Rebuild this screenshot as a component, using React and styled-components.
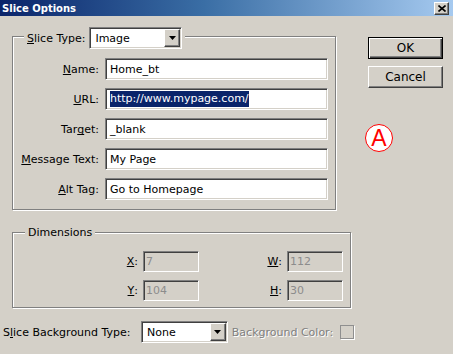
import React from "react";
import styled, { createGlobalStyle, css } from "styled-components";

const GlobalStyle = createGlobalStyle`
  html, body {
    margin: 0;
    padding: 0;
    background: #d4d0c8;
  }
  body {
    font-family: "DejaVu Sans", Tahoma, sans-serif;
    font-size: 11px;
    color: #000;
  }
`;

/* classic 3D borders */
const raised = css`
  border: 1px solid;
  border-color: #fff #404040 #404040 #fff;
  box-shadow: inset -1px -1px 0 #808080, inset 1px 1px 0 #d4d0c8;
`;

const sunken = css`
  border: 1px solid;
  border-color: #808080 #fff #fff #808080;
  box-shadow: inset 1px 1px 0 #404040, inset -1px -1px 0 #d4d0c8;
`;

const App = () => {
  return (
    <>
      <GlobalStyle />
      <Window>
        <TitleBar>
          <Title>Slice Options</Title>
          <CloseButton>
            <svg width="8" height="7" viewBox="0 0 8 7">
              <path d="M0.5 0.5 L7.5 6.5 M7.5 0.5 L0.5 6.5" stroke="#000" strokeWidth="1.6" />
            </svg>
          </CloseButton>
        </TitleBar>

        <Body>
          <LeftColumn>
            {/* Slice group */}
            <GroupBox $width={324} $top={20}>
              <Legend $top={-10} $left={11}>
                <LegendLabel><U>S</U>lice Type:</LegendLabel>
                <Select $width={93} value="Image" />
              </Legend>
              <FieldGrid>
                <Label><U>N</U>ame:</Label>
                <Field>Home_bt</Field>
                <Label><U>U</U>RL:</Label>
                <Field><Selected>http://www.mypage.com/</Selected></Field>
                <Label>Tar<U>g</U>et:</Label>
                <Field>_blank</Field>
                <Label><U>M</U>essage Text:</Label>
                <Field>My Page</Field>
                <Label><U>A</U>lt Tag:</Label>
                <Field>Go to Homepage</Field>
              </FieldGrid>
            </GroupBox>

            {/* Dimensions group */}
            <GroupBox $width={339} $top={22}>
              <Legend $top={-7} $left={12}>
                <LegendText>Dimensions</LegendText>
              </Legend>
              <DimGrid>
                <Label><U>X</U>:</Label>
                <Field $disabled>7</Field>
                <Label><U>W</U>:</Label>
                <Field $disabled>112</Field>
                <Label><U>Y</U>:</Label>
                <Field $disabled>104</Field>
                <Label><U>H</U>:</Label>
                <Field $disabled>30</Field>
              </DimGrid>
            </GroupBox>

            <BottomRow>
              <RowLabel>S<U>l</U>ice Background Type:</RowLabel>
              <Select $width={88} value="None" />
              <DisabledText>Background Color:</DisabledText>
              <Swatch />
            </BottomRow>
          </LeftColumn>

          <RightColumn>
            <Button $default>OK</Button>
            <Button>Cancel</Button>
            <Badge>A</Badge>
          </RightColumn>
        </Body>
      </Window>
    </>
  );
};

const Select = ({ value, $width }) => (
  <SelectBox $width={$width}>
    <SelectValue>{value}</SelectValue>
    <ArrowButton>
      <svg width="7" height="4" viewBox="0 0 7 4">
        <path d="M0 0 H7 L3.5 4 Z" fill="#000" />
      </svg>
    </ArrowButton>
  </SelectBox>
);

const Window = styled.div`
  width: 453px;
  height: 354px;
  background: #d4d0c8;
  overflow: hidden;
  display: flex;
  flex-direction: column;
`;

const TitleBar = styled.div`
  height: 16px;
  flex: none;
  display: flex;
  align-items: center;
  justify-content: space-between;
  padding: 0 4px 0 2px;
  background: linear-gradient(to right, #0a246a 0%, #3a6ea5 45%, #a6caf0 100%);
`;

const Title = styled.span`
  color: #fff;
  font-weight: bold;
  font-size: 10px;
`;

const CloseButton = styled.div`
  ${raised};
  width: 15px;
  height: 13px;
  box-sizing: border-box;
  background: #d4d0c8;
  display: flex;
  align-items: center;
  justify-content: center;
  margin-top: 1px;
`;

const Body = styled.div`
  display: flex;
  padding-left: 3px;
`;

const LeftColumn = styled.div`
  display: flex;
  flex-direction: column;
  width: 351px;
`;

const RightColumn = styled.div`
  display: flex;
  flex-direction: column;
  align-items: flex-start;
  gap: 7px;
  padding-top: 21px;
  margin-left: 11px;
`;

const GroupBox = styled.div`
  display: flex;
  flex-direction: column;
  width: ${(p) => p.$width}px;
  margin: ${(p) => p.$top}px 0 0 9px;
  box-sizing: border-box;
  border: 1px solid #808080;
  box-shadow: 1px 1px 0 #fff, inset 1px 1px 0 #fff;
`;

const Legend = styled.div`
  align-self: flex-start;
  display: flex;
  align-items: center;
  gap: 4px;
  margin: ${(p) => p.$top}px 0 0 ${(p) => p.$left}px;
  padding: 0 3px;
  background: #d4d0c8;
`;

const LegendLabel = styled.span`
  white-space: nowrap;
`;

const LegendText = styled.span`
  line-height: 13px;
`;

const U = styled.span`
  text-decoration: underline;
  text-decoration-skip-ink: none;
  text-underline-offset: 1px;
`;

const FieldGrid = styled.div`
  display: grid;
  grid-template-columns: 86px 223px;
  grid-auto-rows: 22px;
  column-gap: 6px;
  row-gap: 8px;
  padding: 9px 7px 9px 0;
`;

const DimGrid = styled.div`
  display: grid;
  grid-template-columns: 125px 56px 78px 56px;
  grid-auto-rows: 21px;
  column-gap: 5px;
  row-gap: 8px;
  padding: 12px 7px 6px 0;
`;

const Label = styled.span`
  display: flex;
  align-items: center;
  justify-content: flex-end;
  white-space: nowrap;
`;

const Field = styled.div`
  ${sunken};
  box-sizing: border-box;
  display: flex;
  align-items: center;
  padding-left: ${(p) => (p.$disabled ? 2 : 4)}px;
  background: ${(p) => (p.$disabled ? "#d4d0c8" : "#fff")};
  color: ${(p) => (p.$disabled ? "#8c8c8c" : "#000")};
  white-space: nowrap;
  overflow: hidden;
`;

const Selected = styled.span`
  background: #0a246a;
  color: #fff;
  padding: 1px 0 2px;
`;

const SelectBox = styled.div`
  ${sunken};
  box-sizing: border-box;
  width: ${(p) => p.$width}px;
  height: 22px;
  background: #fff;
  display: flex;
  align-items: center;
  padding: 1px;
`;

const SelectValue = styled.span`
  flex: 1;
  padding-left: 4px;
`;

const ArrowButton = styled.div`
  ${raised};
  box-sizing: border-box;
  width: 16px;
  height: 18px;
  background: #d4d0c8;
  display: flex;
  align-items: center;
  justify-content: center;
`;

const BottomRow = styled.div`
  display: flex;
  align-items: center;
  height: 22px;
  margin-top: 13px;
`;

const RowLabel = styled.span`
  width: 140px;
  white-space: nowrap;
`;

const DisabledText = styled.span`
  color: #808080;
  text-shadow: 1px 1px 0 #fff;
  margin: 0 7px 0 4px;
  white-space: nowrap;
`;

const Swatch = styled.div`
  width: 14px;
  height: 14px;
  box-sizing: border-box;
  border: 1px solid #8f8f8f;
  box-shadow: 1px 1px 0 #fff;
`;

const Button = styled.div`
  ${(p) =>
    p.$default
      ? css`
          border: 1px solid #000;
          box-shadow: inset 1px 1px 0 #fff, inset -1px -1px 0 #404040, inset -2px -2px 0 #808080;
        `
      : raised};
  box-sizing: border-box;
  width: 75px;
  height: 22px;
  margin-left: 3px;
  display: flex;
  align-items: center;
  justify-content: center;
  background: #d4d0c8;
  font-size: 12px;
`;

const Badge = styled.div`
  margin-top: 29px;
  width: 28px;
  height: 28px;
  box-sizing: border-box;
  border: 1.5px solid #ff0000;
  border-radius: 50%;
  background: #fff;
  color: #ff0000;
  font-family: "Liberation Sans", Arial, sans-serif;
  font-size: 23px;
  line-height: 1;
  display: flex;
  align-items: center;
  justify-content: center;
  padding-top: 1px;
`;

export default App;
